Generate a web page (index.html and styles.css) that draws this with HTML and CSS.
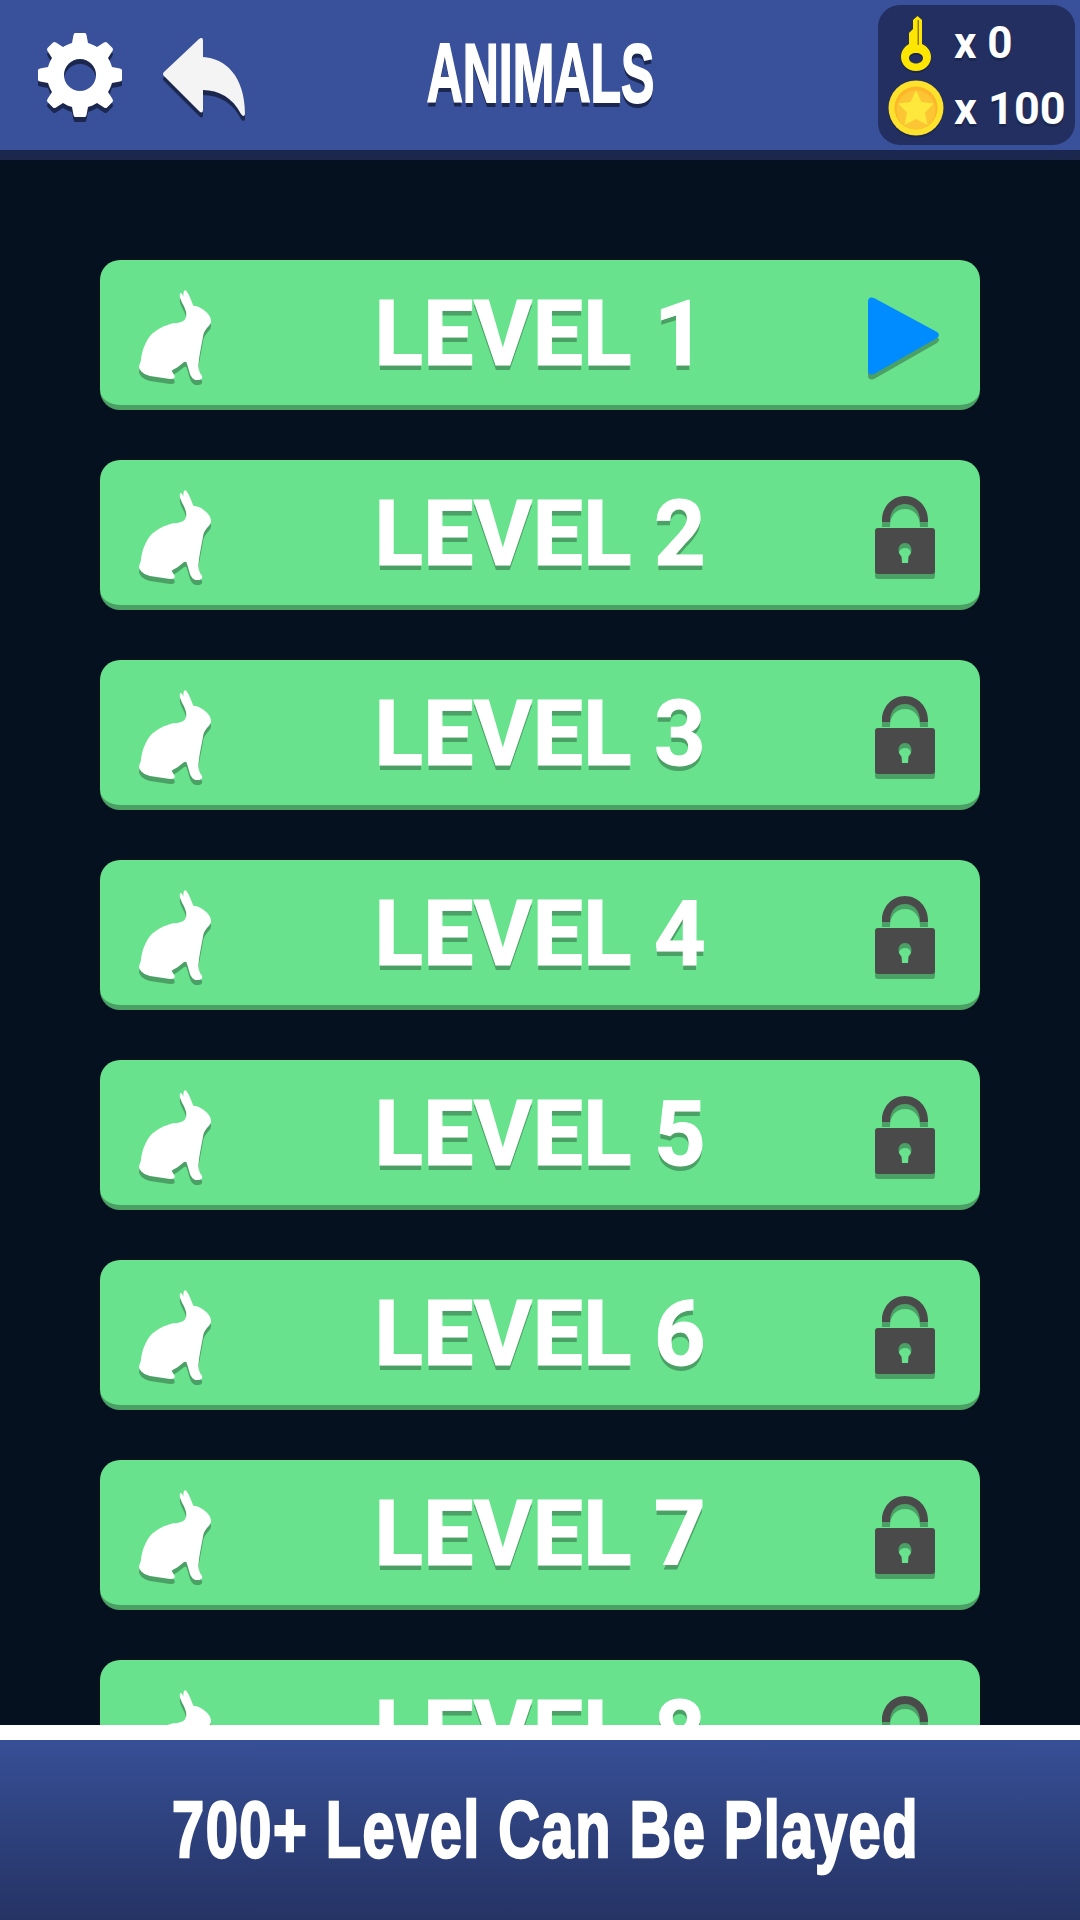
FILE: index.html
```html
<!DOCTYPE html>
<html lang="en">
<head>
<meta charset="utf-8">
<title>Animals</title>
<link rel="stylesheet" href="styles.css">
</head>
<body>
<svg class="defs" width="0" height="0" aria-hidden="true">
  <defs>
    <symbol id="rabbit" viewBox="0 0 300 330">
      <path d="M150 42 C152 36 156 40 160 50 C160 40 161 30 166 31 C172 34 178 48 184 62 L190 77 C206 78 224 88 236 104 C245 116 245 128 238 136 C230 146 222 152 219 170 C215 195 207 225 205 258 C206 272 210 280 216 288 C219 296 212 301 200 300 C190 300 184 292 180 282 L170 248 C167 241 160 247 150 256 C142 263 132 268 125 272 L134 288 C136 295 130 298 120 297 C100 295 80 290 60 288 C42 284 30 274 27 262 C27 254 32 250 33 238 C36 212 46 186 62 166 C80 148 104 136 130 130 C148 128 160 126 166 116 C171 106 169 96 165 86 C160 74 154 66 152 58 C149 52 149 46 150 42 Z"/>
    </symbol>
    <symbol id="lock" viewBox="0 0 60 78">
      <path d="M7 26 V24 C7 11 17 0 30 0 C43 0 53 11 53 24 V26 H45 V25 C45 15 39 8 30 8 C21 8 15 15 15 25 V26 Z"/>
      <path fill-rule="evenodd" d="M3 32 H57 Q60 32 60 35 V75 Q60 78 57 78 H3 Q0 78 0 75 V35 Q0 32 3 32 Z M30 47 C25.500 47 23.500 50.500 23.500 54 C23.500 57 25 59 26.500 60.500 L27 67 H33 L33.500 60.500 C35 59 36.500 57 36.500 54 C36.500 50.500 34.500 47 30 47 Z"/>
    </symbol>
  </defs>
</svg>

<header class="topbar">
  <div class="nav-icons">
    <svg class="gear" viewBox="0 0 84 84" aria-hidden="true">
      <path fill-rule="evenodd" d="M37 0 H47 Q48 0 48.500 2 L50 10 C53 11 56 12 59 14 L66 9.500 Q68 8.500 69 9.500 L74.500 15 Q75.500 16 74.500 18 L70 25 C72 28 73 31 74 34 L82 35.500 Q84 36 84 37 V47 Q84 48 82 48.500 L74 50 C73 53 72 56 70 59 L74.500 66 Q75.500 68 74.500 69 L69 74.500 Q68 75.500 66 74.500 L59 70 C56 72 53 73 50 74 L48.500 82 Q48 84 47 84 H37 Q36 84 35.500 82 L34 74 C31 73 28 72 25 70 L18 74.500 Q16 75.500 15 74.500 L9.500 69 Q8.500 68 9.500 66 L14 59 C12 56 11 53 10 50 L2 48.500 Q0 48 0 47 V37 Q0 36 2 35.500 L10 34 C11 31 12 28 14 25 L9.500 18 Q8.500 16 9.500 15 L15 9.500 Q16 8.500 18 9.500 L25 14 C28 12 31 11 34 10 L35.500 2 Q36 0 37 0 Z M42 26 A16 16 0 1 0 42 58 A16 16 0 1 0 42 26 Z"/>
    </svg>
    <svg class="back" viewBox="0 0 82 80" aria-hidden="true">
      <path d="M36 1 Q40 -2 40 3 V19 C62 20 82 38 82 76 Q81 80 78 76 C70 60 56 52 40 52 V71 Q40 77 36 73 L1 38 Q-1 36 1 34 Z"/>
    </svg>
  </div>
  <h1 class="title">ANIMALS</h1>
  <div class="wallet">
    <div class="wallet-row">
      <span class="wallet-icon">
        <svg class="key" viewBox="0 0 30 55" aria-hidden="true">
          <path fill-rule="evenodd" d="M16.500 0 L21 4 V28 C26 30 30 35 30 41 C30 49 23 55 15 55 C7 55 0 49 0 41 C0 35 4 30 8 28 V17 L12 13 V4 Z M15 37 C11 37 8 39 8 42 C8 45 11 47.500 15 47.500 C19 47.500 22 45 22 42 C22 39 19 37 15 37 Z"/>
          <rect class="key-slot" x="16.500" y="4" width="1.500" height="25"/>
        </svg>
      </span>
      <span class="wallet-count">x 0</span>
    </div>
    <div class="wallet-row">
      <span class="wallet-icon">
        <svg class="coin" viewBox="0 0 56 56" aria-hidden="true">
          <circle cx="28" cy="28" r="27.500" fill="#fde22d"/>
          <circle cx="28" cy="28" r="21.500" fill="#fdb62a"/>
          <circle cx="28" cy="30" r="19.500" fill="#fbc534"/>
          <path d="M28 10 L33.500 22 L46 23.500 L37 32.500 L39.500 45 L28 39 L16.500 45 L19 32.500 L10 23.500 L22.500 22 Z" fill="#fee83c"/>
        </svg>
      </span>
      <span class="wallet-count wallet-count-large">x 100</span>
    </div>
  </div>
</header>

<main class="levels">
  <div class="level"><svg class="rabbit"><use href="#rabbit"/></svg><span class="level-name">LEVEL 1</span><svg class="play" viewBox="0 0 72 78" aria-hidden="true"><path d="M0 5 Q0 -1 6 1 L69 35 Q73 38 69 41 L6 77 Q0 79 0 73 Z"/></svg></div>
  <div class="level"><svg class="rabbit"><use href="#rabbit"/></svg><span class="level-name">LEVEL 2</span><svg class="lock"><use href="#lock"/></svg></div>
  <div class="level"><svg class="rabbit"><use href="#rabbit"/></svg><span class="level-name">LEVEL 3</span><svg class="lock"><use href="#lock"/></svg></div>
  <div class="level"><svg class="rabbit"><use href="#rabbit"/></svg><span class="level-name">LEVEL 4</span><svg class="lock"><use href="#lock"/></svg></div>
  <div class="level"><svg class="rabbit"><use href="#rabbit"/></svg><span class="level-name">LEVEL 5</span><svg class="lock"><use href="#lock"/></svg></div>
  <div class="level"><svg class="rabbit"><use href="#rabbit"/></svg><span class="level-name">LEVEL 6</span><svg class="lock"><use href="#lock"/></svg></div>
  <div class="level"><svg class="rabbit"><use href="#rabbit"/></svg><span class="level-name">LEVEL 7</span><svg class="lock"><use href="#lock"/></svg></div>
  <div class="level"><svg class="rabbit"><use href="#rabbit"/></svg><span class="level-name">LEVEL 8</span><svg class="lock"><use href="#lock"/></svg></div>
</main>

<footer class="promo">
  <p class="promo-text">700+ Level Can Be Played</p>
</footer>
</body>
</html>
```

FILE: styles.css
```css
* { box-sizing: border-box; }

html, body { margin: 0; padding: 0; }

body {
  width: 1080px;
  height: 1920px;
  display: flex;
  flex-direction: column;
  overflow: hidden;
  background: #05111f;
  font-family: Roboto, "Liberation Sans", sans-serif;
  color: #fff;
}

.defs { position: absolute; }

.topbar {
  flex: none;
  height: 160px;
  display: grid;
  grid-template-columns: 1fr auto 1fr;
  align-items: center;
  padding: 0 5px;
  background: #39509b;
  border-bottom: 10px solid #1b274e;
}

.nav-icons {
  display: flex;
  align-items: center;
  gap: 41px;
  padding-left: 33px;
}

.gear {
  width: 84px;
  height: 84px;
  fill: #fff;
  filter: drop-shadow(0 5px 0 #1b274e);
}

.back {
  width: 82px;
  height: 80px;
  margin-top: 5px;
  fill: #f4f4f4;
  filter: drop-shadow(0 5px 0 #1b274e);
}

.title {
  margin: 0 0 4px;
  width: 227px;
  display: flex;
  justify-content: center;
  font-family: "Liberation Sans", Arial, sans-serif;
  font-weight: 700;
  font-size: 84px;
  line-height: 1;
  white-space: nowrap;
  transform: scaleX(0.595);
  -webkit-text-stroke: 2px #fff;
  text-shadow: 0 5px 0 #1b274e;
}

.wallet {
  justify-self: end;
  width: 197px;
  height: 140px;
  display: flex;
  flex-direction: column;
  justify-content: space-between;
  padding: 10px 0 9px 10px;
  background: #222f60;
  border-radius: 22px;
}

.wallet-row {
  display: flex;
  align-items: center;
  gap: 10px;
}

.wallet-icon {
  width: 56px;
  height: 56px;
  display: flex;
  align-items: center;
  justify-content: center;
}

.key {
  width: 30px;
  height: 55px;
  fill: #ffe600;
  filter: drop-shadow(0 2px 0 #1b274e);
}

.key-slot { fill: #8a7d1c; }

.coin {
  width: 56px;
  height: 56px;
  filter: drop-shadow(0 2px 0 #1b274e);
}

.wallet-count {
  font-weight: 700;
  font-size: 44px;
  line-height: 1;
  text-shadow: 0 3px 0 #1b274e;
  white-space: nowrap;
}

.wallet-count-large { font-size: 45px; }

.levels {
  flex: 1;
  min-height: 0;
  overflow: hidden;
  display: flex;
  flex-direction: column;
  align-items: center;
  gap: 50px;
  padding-top: 100px;
}

.level {
  flex: none;
  position: relative;
  width: 880px;
  height: 150px;
  display: flex;
  align-items: center;
  justify-content: center;
  padding-top: 5px;
  background: #68e28c;
  border-bottom: 5px solid #4ba165;
  border-radius: 20px;
}

.level-name {
  font-weight: 700;
  font-size: 90px;
  line-height: 1;
  -webkit-text-stroke: 1px #fff;
  text-shadow: 0 5px 0 #4ba165;
  white-space: nowrap;
}

.rabbit {
  position: absolute;
  left: 30px;
  top: 20px;
  width: 100px;
  height: 110px;
  fill: #fff;
  filter: drop-shadow(0 5px 0 #4ba165);
}

.play {
  position: absolute;
  left: 768px;
  top: 37px;
  width: 72px;
  height: 78px;
  fill: #008cff;
  filter: drop-shadow(0 5px 0 #4ba165);
}

.lock {
  position: absolute;
  left: 775px;
  top: 36px;
  width: 60px;
  height: 78px;
  fill: #4a4a4a;
  filter: drop-shadow(0 5px 0 #4ba165);
}

.promo {
  flex: none;
  height: 195px;
  display: flex;
  align-items: center;
  justify-content: center;
  padding-left: 11px;
  border-top: 15px solid #fff;
  background: linear-gradient(#374f96, #253364);
}

.promo-text {
  margin: 0;
  font-family: "Liberation Sans", Arial, sans-serif;
  font-weight: 700;
  font-size: 80px;
  line-height: 1;
  letter-spacing: 2px;
  white-space: nowrap;
  transform: scaleX(0.723);
  -webkit-text-stroke: 2.5px #fff;
}
```
